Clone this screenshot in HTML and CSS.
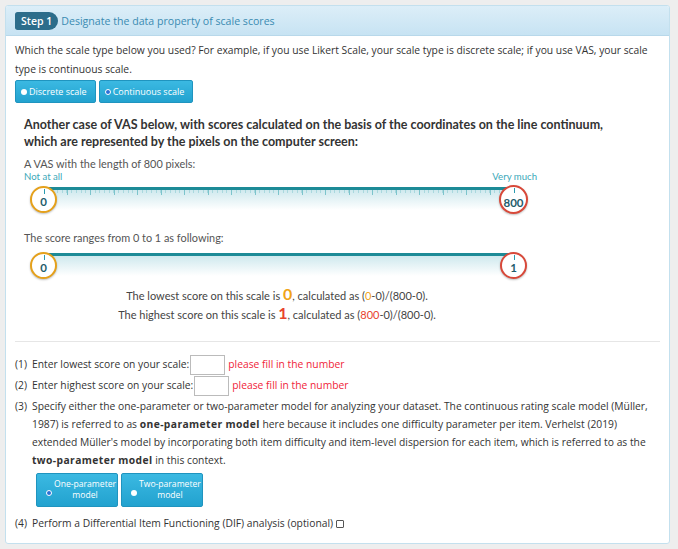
FILE: index.html
```html
<!DOCTYPE html>
<html lang="en">
<head>
    <meta charset="UTF-8">
    <meta name="viewport" content="width=device-width, initial-scale=1.0">
    <title>Scale Scores</title>
    <link rel="stylesheet" href="styles.css">
</head>
<body>
    <div class="panel">

        <!-- Step header -->
        <div class="panel-head">
            <span class="step-badge">Step 1</span>
            <span class="step-title">Designate the data property of scale scores</span>
        </div>

        <div class="panel-body">
            <p class="intro">Which the scale type below you used? For example, if you use Likert Scale, your scale type is discrete scale; if you use VAS, your scale type is continuous scale.</p>

            <div class="btn-row">
                <label class="btn"><span class="radio"></span>Discrete scale</label>
                <label class="btn"><span class="radio checked"></span>Continuous scale</label>
            </div>

            <!-- VAS explanation -->
            <div class="vas-figure">
                <h4>Another case of VAS below, with scores calculated on the basis of the coordinates on the line continuum,<br>which are represented by the pixels on the computer screen:</h4>
                <p class="vas-note">A VAS with the length of 800 pixels:</p>
                <div class="anchors">
                    <span>Not at all</span>
                    <span>Very much</span>
                </div>
                <div class="scale">
                    <div class="scale-shade"></div>
                    <div class="scale-ticks"></div>
                    <div class="scale-line"></div>
                    <span class="knob knob-low">0</span>
                    <span class="knob knob-high knob-wide">800</span>
                </div>

                <p class="vas-note range-note">The score ranges from 0 to 1 as following:</p>
                <div class="scale scale-range">
                    <div class="scale-shade"></div>
                    <div class="scale-line"></div>
                    <span class="knob knob-low">0</span>
                    <span class="knob knob-high">1</span>
                </div>

                <div class="results">
                    <p>The lowest score on this scale is <b class="low">0</b>, calculated as (<span class="low">0</span>-0)/(800-0).</p>
                    <p>The highest score on this scale is <b class="high">1</b>, calculated as (<span class="high">800</span>-0)/(800-0).</p>
                </div>
            </div>

            <hr class="divider">

            <div class="item">
                <span class="item-num">(1)</span>
                <div class="item-text">Enter lowest score on your scale:<input type="text" class="score-input"><span class="warn">please fill in the number</span></div>
            </div>
            <div class="item">
                <span class="item-num">(2)</span>
                <div class="item-text">Enter highest score on your scale:<input type="text" class="score-input"><span class="warn">please fill in the number</span></div>
            </div>
            <div class="item">
                <span class="item-num">(3)</span>
                <div class="item-text">
                    Specify either the one-parameter or two-parameter model for analyzing your dataset. The continuous rating scale model (Müller, 1987) is referred to as <b>one-parameter model</b> here because it includes one difficulty parameter per item. Verhelst (2019) extended Müller's model by incorporating both item difficulty and item-level dispersion for each item, which is referred to as the <b>two-parameter model</b> in this context.
                    <div class="btn-row model-row">
                        <label class="btn btn-model"><span class="radio checked"></span><span class="btn-label">One-parameter<br>model</span></label>
                        <label class="btn btn-model"><span class="radio"></span><span class="btn-label">Two-parameter<br>model</span></label>
                    </div>
                </div>
            </div>
            <div class="item">
                <span class="item-num">(4)</span>
                <div class="item-text">Perform a Differential Item Functioning (DIF) analysis (optional) <span class="check"></span></div>
            </div>
        </div>
    </div>
</body>
</html>
```

FILE: styles.css
```css
/* Page */
body {
    font-family: 'Open Sans', 'Liberation Sans', sans-serif;
    font-size: 10.3px;
    color: #333;
    margin: 0;
    padding: 5px 8px 5px 5px;
    background: #eeeeee;
}
p {
    margin: 0;
}
.panel {
    background: #fff;
    border: 1px solid #c3e0ee;
    border-radius: 3px;
    overflow: hidden;
}
.panel-head {
    height: 29px;
    display: flex;
    align-items: center;
    padding-left: 9px;
    background: linear-gradient(to bottom, #dceef8, #c7e3f3);
    border-bottom: 1px solid #b8d8ea;
}
.step-badge {
    background: #2c6d8b;
    color: #fff;
    font-weight: 600;
    font-size: 10.5px;
    height: 18px;
    line-height: 18px;
    padding: 0 6px 0 6px;
    border-radius: 3px 10px 10px 3px;
    margin-right: 3px;
}
.step-title {
    color: #3a8bb2;
    font-size: 10.6px;
}
.panel-body {
    padding: 5px 6px 11px 9px;
}
.intro {
    line-height: 19px;
}
b {
    letter-spacing: 0.4px;
}

/* Buttons */
.btn-row {
    display: flex;
    gap: 3px;
    margin-top: 1px;
}
.btn {
    display: flex;
    align-items: center;
    gap: 2px;
    height: 23px;
    box-sizing: border-box;
    padding: 0 8px 0 5px;
    color: #fff;
    font-size: 9px;
    background: linear-gradient(to bottom, #3bb9e2, #22a2cf);
    border: 1px solid #1f94bf;
    border-radius: 2px;
}
.radio {
    width: 6px;
    height: 6px;
    border-radius: 50%;
    background: #fff;
    box-sizing: border-box;
    flex-shrink: 0;
}
.radio.checked {
    border: 1.5px solid #fff;
    background: #2a6fd6;
}

/* VAS figure */
.vas-figure {
    width: 506px;
    margin: 13px 0 0 9px;
    font-family: 'Lato', 'Liberation Sans', sans-serif;
}
.vas-figure h4 {
    margin: 0;
    width: 620px;
    font-size: 12.5px;
    line-height: 17px;
    color: #333;
}
.vas-note {
    color: #555;
    font-size: 10.9px;
    line-height: 16px;
    margin-top: 6px;
}
.range-note {
    margin-top: 15px;
}
.anchors {
    display: flex;
    justify-content: space-between;
    color: #3aa8b9;
    font-size: 9.6px;
    line-height: 12px;
    margin-top: -1px;
    width: 513px;
}
.scale {
    position: relative;
    width: 497px;
    height: 28px;
    margin: 4px 0 0 6px;
}
.scale-range {
    margin-top: 7px;
}
.scale-line {
    position: absolute;
    left: 13px;
    right: 14px;
    top: 0;
    height: 3px;
    background: #1d8b97;
}
.scale-ticks {
    position: absolute;
    left: 13px;
    right: 14px;
    top: 3px;
    height: 5px;
    background:
        repeating-linear-gradient(to right, #7cc4cc 0 1px, transparent 1px 23.5px),
        repeating-linear-gradient(to right, #a9d8de 0 1px, transparent 1px 4.7px);
    background-size: 100% 5px, 100% 3px;
    background-repeat: no-repeat;
}
.scale-shade {
    position: absolute;
    left: 13px;
    right: 14px;
    top: 3px;
    height: 20px;
    background: linear-gradient(to bottom, #cfe9ee, rgba(255, 255, 255, 0));
}
.knob {
    position: absolute;
    top: -1px;
    width: 27px;
    height: 27px;
    box-sizing: border-box;
    border-radius: 50%;
    background: #fff;
    display: flex;
    align-items: center;
    justify-content: center;
    padding-top: 4px;
    font-weight: bold;
    font-size: 11.5px;
    color: #1f5c6b;
    box-shadow: 0 1px 2px rgba(0, 0, 0, 0.25);
}
.knob::before {
    content: "";
    position: absolute;
    top: 1px;
    left: 50%;
    width: 1px;
    height: 5px;
    background: #2a9bb0;
}
.knob-low {
    left: 0;
    border: 2.5px solid #e5a11c;
}
.knob-high {
    right: 0;
    border: 2.5px solid #d8493a;
}
.knob-wide {
    width: 29px;
    height: 29px;
    top: -2px;
    right: -1px;
    font-size: 11.5px;
    padding-top: 5px;
}
.results {
    text-align: center;
    color: #444;
    font-size: 11px;
    line-height: 19px;
    margin-top: 5px;
}
.results b {
    font-size: 16px;
    line-height: 16px;
    letter-spacing: 0;
}
.low {
    color: #f0a417;
}
.high {
    color: #e8432e;
}

/* Questions */
.divider {
    border: none;
    border-top: 1px solid #e6e6e6;
    margin: 17px 3px 13px 0;
}
.item {
    display: flex;
    line-height: 18px;
}
.item-num {
    width: 17px;
    flex-shrink: 0;
}
.score-input {
    width: 35px;
    height: 20px;
    box-sizing: border-box;
    border: 1px solid #bbb;
    margin: 0 3px 1px 1px;
    vertical-align: middle;
    padding: 0;
}
.warn {
    color: #f0243a;
}
.model-row {
    margin: 4px 0 7px 4px;
}
.btn-model {
    height: 34px;
    width: 82px;
    padding: 0 2px 0 9px;
    font-size: 8.6px;
    line-height: 11px;
    gap: 2px;
}
.btn-model .btn-label {
    flex: 1;
    text-align: center;
    white-space: nowrap;
}
.btn-model .radio {
    margin-top: 6px;
}
.check {
    display: inline-block;
    width: 6px;
    height: 6px;
    border: 1px solid #555;
    border-radius: 1px;
    vertical-align: middle;
}
```
